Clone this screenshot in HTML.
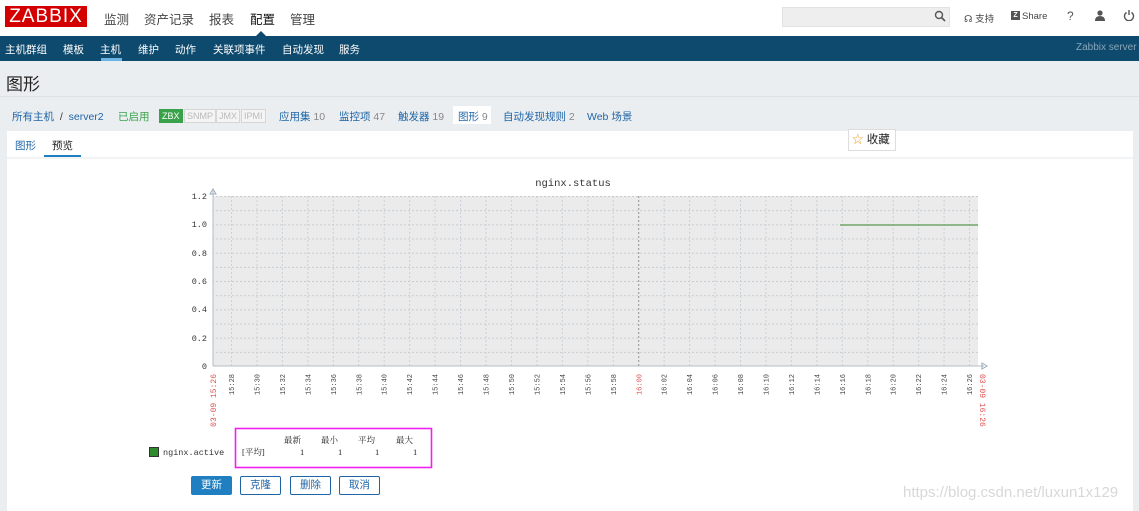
<!DOCTYPE html>
<html><head><meta charset="utf-8"><style>
*{margin:0;padding:0;box-sizing:border-box}
body{width:1139px;height:511px;overflow:hidden;background:#ebeef0;font-family:"Liberation Sans","Noto Sans CJK SC",sans-serif;position:relative}
.a{position:absolute;white-space:nowrap}
.top{position:absolute;left:0;top:0;width:1139px;height:36px;background:#fff}
.nav{position:absolute;left:0;top:36px;width:1139px;height:25px;background:#0e4a6d}
.tm{font-size:12.5px;color:#444;top:9px}
.sm{font-size:10.5px;color:#fff;top:42px}
.bc{font-size:10.5px;color:#1f65a6;top:109px}
.bc i{font-style:normal;color:#888}
.tag{top:109px;height:14px;font-size:9px;line-height:12px;padding:0 2px;border:1px solid #d6d6d6;color:#bbb;background:#f4f4f4}
.btn{top:476px;height:19px;width:41px;font-size:10.5px;line-height:17px;text-align:center;border:1px solid #1f65a6;color:#1f65a6;background:#fff;border-radius:2px}
</style></head><body>
<div class="top"></div>
<div class="a" style="left:5px;top:6px;width:82px;height:21px;background:#d40000;color:#fff;font-size:19px;line-height:21px;text-align:center;letter-spacing:1px">ZABBIX</div>
<div class="a tm" style="left:104px">监测</div>
<div class="a tm" style="left:144px">资产记录</div>
<div class="a tm" style="left:209px">报表</div>
<div class="a tm" style="left:250px;color:#111">配置</div>
<div class="a tm" style="left:290px">管理</div>
<div class="a" style="left:256px;top:31px;width:0;height:0;border-left:5px solid transparent;border-right:5px solid transparent;border-bottom:5px solid #0e4a6d"></div>
<div class="a" style="left:782px;top:7px;width:168px;height:20px;background:#eeeeee;border:1px solid #e2e2e2"></div>
<svg class="a" style="left:934px;top:10px" width="12" height="12"><circle cx="5" cy="5" r="3.5" fill="none" stroke="#555" stroke-width="1.4"/><line x1="7.5" y1="7.5" x2="11" y2="11" stroke="#555" stroke-width="1.6"/></svg>
<div class="a" style="left:964px;top:11px;font-size:9.5px;color:#444">☊ 支持</div>
<div class="a" style="left:1011px;top:11px;width:9px;height:9px;background:#555;color:#fff;font-size:7px;line-height:9px;text-align:center;font-weight:bold">Z</div>
<div class="a" style="left:1022px;top:11px;font-size:9.5px;color:#444">Share</div>
<div class="a" style="left:1067px;top:9px;font-size:12px;color:#555">?</div>
<svg class="a" style="left:1094px;top:10px" width="12" height="11"><circle cx="6" cy="3" r="2.6" fill="#555"/><path d="M1 11 Q1 6 6 6 Q11 6 11 11Z" fill="#555"/></svg>
<svg class="a" style="left:1123px;top:9px" width="12" height="12"><path d="M3.5 3.5 A4.5 4.5 0 1 0 8.5 3.5" fill="none" stroke="#555" stroke-width="1.4"/><line x1="6" y1="1" x2="6" y2="6" stroke="#555" stroke-width="1.4"/></svg>
<div class="nav"></div>
<div class="a sm" style="left:5px">主机群组</div>
<div class="a sm" style="left:63px">模板</div>
<div class="a sm" style="left:100px">主机</div>
<div class="a" style="left:101px;top:58px;width:21px;height:3px;background:#6cb4e4"></div>
<div class="a sm" style="left:138px">维护</div>
<div class="a sm" style="left:175px">动作</div>
<div class="a sm" style="left:213px">关联项事件</div>
<div class="a sm" style="left:282px">自动发现</div>
<div class="a sm" style="left:339px">服务</div>
<div class="a" style="left:1076px;top:42px;font-size:10px;color:#8aa5b8">Zabbix server</div>
<div class="a" style="left:6px;top:70px;font-size:17px;color:#222">图形</div>
<div class="a" style="left:0;top:96px;width:1139px;height:1px;background:#dde1e4"></div>
<div class="a bc" style="left:12px">所有主机 <span style="color:#333">&nbsp;/&nbsp;</span> server2</div>
<div class="a bc" style="left:118px;color:#3aa24a">已启用</div>
<div class="a tag" style="left:159px;background:#3aa24a;border-color:#3aa24a;color:#fff">ZBX</div>
<div class="a tag" style="left:184px">SNMP</div>
<div class="a tag" style="left:216px">JMX</div>
<div class="a tag" style="left:241px">IPMI</div>
<div class="a bc" style="left:279px">应用集 <i>10</i></div>
<div class="a bc" style="left:339px">监控项 <i>47</i></div>
<div class="a bc" style="left:398px">触发器 <i>19</i></div>
<div class="a" style="left:453px;top:106px;width:38px;height:18px;background:#fff"></div>
<div class="a bc" style="left:458px">图形 <i>9</i></div>
<div class="a bc" style="left:503px">自动发现规则 <i>2</i></div>
<div class="a bc" style="left:587px">Web 场景</div>
<div class="a" style="left:7px;top:131px;width:1126px;height:380px;background:#fff"></div>
<div class="a" style="left:7px;top:157px;width:1126px;height:2px;background:#f2f3f4"></div>
<div class="a" style="left:15px;top:138px;font-size:10.5px;color:#1f65a6">图形</div>
<div class="a" style="left:52px;top:138px;font-size:10.5px;color:#222">预览</div>
<div class="a" style="left:44px;top:155px;width:37px;height:2px;background:#1f7fc0"></div>
<div class="a" style="left:848px;top:129px;width:48px;height:22px;border:1px solid #ddd;background:#fff;font-size:11.5px;line-height:20px;padding-left:3px;color:#222"><span style="color:#f0a030">☆</span> 收藏</div>
<svg class="a" style="left:0;top:0" width="1139" height="511" font-family="Liberation Mono,monospace">
<defs>
<pattern id="v" x="231" y="0" width="25.45" height="511" patternUnits="userSpaceOnUse"><line x1="0.5" y1="0" x2="0.5" y2="511" stroke="#c8d2da" stroke-dasharray="2,2"/></pattern>
<pattern id="h" x="0" y="196" width="1139" height="14.17" patternUnits="userSpaceOnUse"><line x1="0" y1="0.5" x2="1139" y2="0.5" stroke="#c8ccd0" stroke-dasharray="2,2"/></pattern>
</defs>
<text x="573" y="186" font-size="10.5" text-anchor="middle" fill="#333">nginx.status</text>
<rect x="213" y="196" width="765" height="170" fill="#ebebeb"/>
<rect x="213" y="196" width="765" height="170" fill="url(#v)"/>
<rect x="213" y="196" width="765" height="170" fill="url(#h)"/>
<line x1="638.7" y1="196" x2="638.7" y2="366" stroke="#999" stroke-dasharray="2,2"/>
<line x1="213" y1="191" x2="213" y2="366" stroke="#b0bcc6"/>
<line x1="213" y1="366" x2="984" y2="366" stroke="#b0bcc6"/>
<path d="M210 194 L213 189 L216 194Z M982 363 L987 366 L982 369Z" fill="none" stroke="#9ab"/>
<line x1="840" y1="225" x2="978" y2="225" stroke="#5a9a50" stroke-width="1.2"/>
<g font-size="8.5" fill="#333" text-anchor="end">
<text x="207" y="199">1.2</text><text x="207" y="227">1.0</text><text x="207" y="256">0.8</text><text x="207" y="284">0.6</text><text x="207" y="312">0.4</text><text x="207" y="341">0.2</text><text x="207" y="369">0</text>
</g>
<g font-size="7" fill="#444" text-anchor="end">
<text transform="translate(234,374) rotate(-90)">15:28</text>
<text transform="translate(259.5,374) rotate(-90)">15:30</text>
<text transform="translate(285,374) rotate(-90)">15:32</text>
<text transform="translate(310.4,374) rotate(-90)">15:34</text>
<text transform="translate(335.8,374) rotate(-90)">15:36</text>
<text transform="translate(361.3,374) rotate(-90)">15:38</text>
<text transform="translate(386.7,374) rotate(-90)">15:40</text>
<text transform="translate(412.2,374) rotate(-90)">15:42</text>
<text transform="translate(437.6,374) rotate(-90)">15:44</text>
<text transform="translate(463.1,374) rotate(-90)">15:46</text>
<text transform="translate(488.5,374) rotate(-90)">15:48</text>
<text transform="translate(514,374) rotate(-90)">15:50</text>
<text transform="translate(539.4,374) rotate(-90)">15:52</text>
<text transform="translate(564.9,374) rotate(-90)">15:54</text>
<text transform="translate(590.3,374) rotate(-90)">15:56</text>
<text transform="translate(615.8,374) rotate(-90)">15:58</text>
<text transform="translate(641.7,374) rotate(-90)" fill="#e05050">16:00</text>
<text transform="translate(666.7,374) rotate(-90)">16:02</text>
<text transform="translate(692.1,374) rotate(-90)">16:04</text>
<text transform="translate(717.6,374) rotate(-90)">16:06</text>
<text transform="translate(743,374) rotate(-90)">16:08</text>
<text transform="translate(768.5,374) rotate(-90)">16:10</text>
<text transform="translate(793.9,374) rotate(-90)">16:12</text>
<text transform="translate(819.4,374) rotate(-90)">16:14</text>
<text transform="translate(844.8,374) rotate(-90)">16:16</text>
<text transform="translate(870.3,374) rotate(-90)">16:18</text>
<text transform="translate(895.7,374) rotate(-90)">16:20</text>
<text transform="translate(921.2,374) rotate(-90)">16:22</text>
<text transform="translate(946.6,374) rotate(-90)">16:24</text>
<text transform="translate(972.1,374) rotate(-90)">16:26</text>
</g>
<g font-size="8" fill="#e05050" text-anchor="end">
<text transform="translate(216,374) rotate(-90)">03-09 15:26</text>
<text transform="translate(980,374) rotate(90)" text-anchor="start">03-09 16:26</text>
</g>
<rect x="149.5" y="447.5" width="9" height="9" fill="#2e8b2e" stroke="#333"/>
<text x="163" y="455" font-size="8.5" fill="#333">nginx.active</text>
<rect x="235.5" y="428.5" width="196" height="39" fill="none" stroke="#ee22ee" stroke-width="1.6"/>
<g font-size="8.5" fill="#222" font-family="Liberation Serif,'Noto Serif CJK SC',serif">
<text x="284" y="443">最新</text><text x="321" y="443">最小</text><text x="358" y="443">平均</text><text x="396" y="443">最大</text>
<text x="242" y="455">[平均]</text>
<text x="300" y="455">1</text><text x="338" y="455">1</text><text x="375" y="455">1</text><text x="413" y="455">1</text>
</g>
</svg>
<div class="a btn" style="left:191px;background:#1f7fc0;border-color:#1f7fc0;color:#fff">更新</div>
<div class="a btn" style="left:240px">克隆</div>
<div class="a btn" style="left:290px">删除</div>
<div class="a btn" style="left:339px">取消</div>
<div class="a" style="left:903px;top:484px;font-size:15px;color:#d8d8d8">https://blog.csdn.net/luxun1x129</div>
</body></html>
